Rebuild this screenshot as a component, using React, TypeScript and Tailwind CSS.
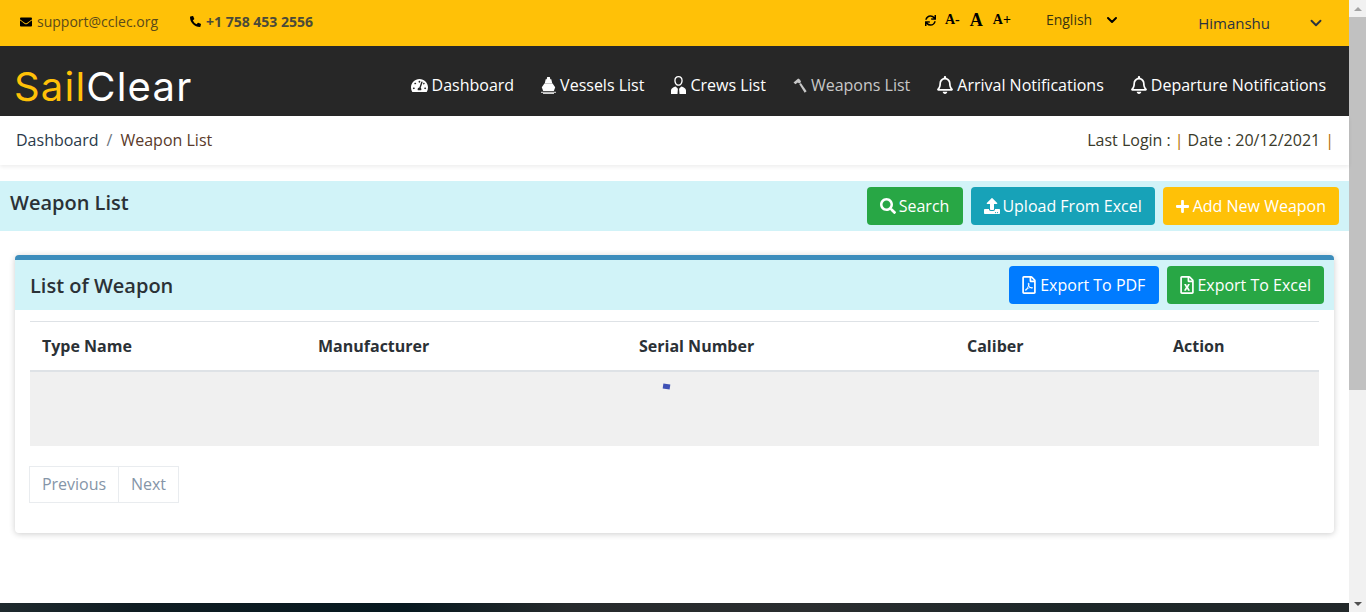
import React from 'react';
import {
  FaEnvelope,
  FaPhoneAlt,
  FaSync,
  FaTachometerAlt,
  FaRegBell,
  FaSearch,
  FaUpload,
  FaPlus,
  FaRegFilePdf,
  FaRegFileExcel,
} from 'react-icons/fa';
import { LuChevronDown } from 'react-icons/lu';

const ShipIcon = () => (
  <svg width="15" height="17" viewBox="0 0 15 17" fill="currentColor">
    <path d="M6.200 0h2.600l.5 2.200h1l1 4.300H3.700l1-4.300h1z" />
    <path d="M3.400 6.500h8.200l2.600 3.700-1.400 3.800H2.200L.8 10.200z" />
    <path d="M0 14.800h15v.9H0z" />
    <path d="M2 16.200h11v.8H2z" />
  </svg>
);

const CrewIcon = () => (
  <svg width="15" height="18" viewBox="0 0 15 18" fill="currentColor">
    <path
      fillRule="evenodd"
      d="M7.500 0c2.700 0 4.200 1.800 4.200 4.400 0 2.800-1.700 5.400-4.200 5.400S3.300 7.200 3.300 4.400C3.300 1.800 4.800 0 7.500 0zm0 1.200C5.700 1.200 4.600 2.600 4.600 4.400c0 2.100 1.300 4.200 2.900 4.200s2.900-2.100 2.900-4.200c0-1.800-1.100-3.200-2.900-3.200z"
    />
    <path d="M4.700 10.400l2.200 2.400-.4 5.200H0v-3.600c0-2.100 2.400-3.300 4.700-4zM10.300 10.400L8.100 12.800l.4 5.200H15v-3.600c0-2.100-2.400-3.300-4.700-4z" />
  </svg>
);

const HammerIcon = () => (
  <svg width="14" height="15" viewBox="0 0 14 15" fill="currentColor">
    <path d="M0.500 4.600L5.200.600l1.900 1.100 1 2.200-1.800 1.500-1.500-1-2.400 1.800z" />
    <path d="M6.300 6.300l1.600-1.300 5.700 8.200-1.900 1.500z" />
  </svg>
);

const NAV = [
  { label: 'Dashboard', icon: <FaTachometerAlt className="text-[17px]" />, cls: 'text-white' },
  { label: 'Vessels List', icon: <ShipIcon />, cls: 'text-white' },
  { label: 'Crews List', icon: <CrewIcon />, cls: 'text-white' },
  { label: 'Weapons List', icon: <HammerIcon />, cls: 'text-[#c8c8c8]' },
  { label: 'Arrival Notifications', icon: <FaRegBell className="h-[18px] w-[16px]" />, cls: 'text-white' },
  { label: 'Departure Notifications', icon: <FaRegBell className="h-[18px] w-[16px]" />, cls: 'text-white' },
];

const App: React.FC = () => {
  return (
    <div className="flex h-[612px] w-[1366px] overflow-hidden bg-white font-['Open_Sans',sans-serif] text-[#212529]">
      <div className="flex w-[1349px] flex-col">
        {/* top strip */}
        <div className="flex h-[46px] shrink-0 bg-[#ffc107]">
          <div className="flex items-center pb-[3px] pl-[20px] text-[14px]">
            <FaEnvelope className="mr-[5px] text-[12px] text-black" />
            <span className="text-[#5a4a1a]">support@cclec.org</span>
            <FaPhoneAlt className="ml-[32px] mr-[5px] text-[11px] text-black" />
            <span className="font-bold text-[#4a4a3a]">+1 758 453 2556</span>
          </div>
          <div className="ml-auto flex items-start">
            <div className="flex items-center pt-[11px] font-['Liberation_Serif',serif] font-bold text-black">
              <FaSync className="mr-[9px] text-[11px]" />
              <span className="mr-[10px] text-[14px] leading-[14px]">A-</span>
              <span className="mr-[10px] text-[18px] leading-[18px]">A</span>
              <span className="text-[14px] leading-[14px]">A+</span>
            </div>
            <div className="ml-[35px] flex items-center pt-[9px] text-[14px] text-[#3a3410]">
              English
              <LuChevronDown className="ml-[12px] text-[16px] text-black" strokeWidth={3} />
            </div>
            <div className="ml-[78px] mr-[24px] flex items-center pt-[12px] text-[15px] text-[#2b3340]">
              Himanshu
              <LuChevronDown className="ml-[37px] text-[18px]" strokeWidth={2.5} />
            </div>
          </div>
        </div>

        {/* main nav */}
        <div className="flex h-[70px] shrink-0 items-center bg-[#272727] pl-[14px] pr-[23px]">
          <div className="pt-[12px] font-['Inter',sans-serif] text-[40px] font-normal leading-none tracking-[1.2px]">
            <span className="text-[#ffc107]">Sail</span>
            <span className="text-white">Clear</span>
          </div>
          <div className="ml-auto flex items-center gap-[27px] pt-[8px]">
            {NAV.map((n) => (
              <div key={n.label} className={`flex items-center gap-[4px] text-[16px] font-medium ${n.cls}`}>
                {n.icon}
                <span>{n.label}</span>
              </div>
            ))}
          </div>
        </div>

        {/* breadcrumb */}
        <div className="relative flex h-[49px] shrink-0 items-center justify-between bg-white pb-[2px] pl-[16px] pr-[15px] text-[16px] shadow-[0_2px_4px_rgba(0,0,0,0.07)]">
          <div className="flex items-center text-[#2a3a4a]">
            <span>Dashboard</span>
            <span className="mx-[8px] text-[#6c757d]">/</span>
            <span className="text-[#5a3a2a]">Weapon List</span>
          </div>
          <div className="flex items-center text-[#3a3a2a]">
            <span>Last Login :</span>
            <span className="mx-[4px] text-[#b36b00]">|</span>
            <span>Date : 20/12/2021</span>
            <span className="ml-[5px] text-[#b36b00]">|</span>
          </div>
        </div>

        {/* title band */}
        <div className="mt-[16px] flex h-[50px] shrink-0 items-start justify-between bg-[#d1f3f8] pl-[10px] pr-[10px]">
          <h1 className="pt-[7px] text-[20px] font-semibold leading-[30px] text-[#2b3136]">Weapon List</h1>
          <div className="flex gap-[8px] pt-[6px]">
            <button className="flex h-[38px] items-center gap-[3px] rounded-[4px] bg-[#28a745] pl-[13px] pr-[14px] text-[16px] text-white">
              <FaSearch className="text-[16px]" /> Search
            </button>
            <button className="flex h-[38px] items-center gap-[2px] rounded-[4px] bg-[#17a2b8] px-[13px] text-[16px] text-white">
              <FaUpload className="text-[16px]" /> Upload From Excel
            </button>
            <button className="flex h-[38px] items-center gap-[4px] rounded-[4px] bg-[#ffc107] px-[13px] text-[16px] text-white">
              <FaPlus className="h-[15px] w-[13px]" /> Add New Weapon
            </button>
          </div>
        </div>

        {/* card */}
        <div className="ml-[15px] mt-[24px] h-[278px] w-[1319px] shrink-0 rounded-[4px] border-t-[5px] border-[#3c8dbc] bg-white shadow-[0_1px_6px_rgba(0,0,0,0.2)]">
          <div className="flex h-[50px] items-start justify-between bg-[#d1f3f8] pl-[15px] pr-[10px]">
            <h2 className="pt-[11px] text-[20px] font-semibold leading-[30px] text-[#2b3136]">List of Weapon</h2>
            <div className="flex gap-[8px] pt-[6px]">
              <button className="flex h-[38px] items-center gap-[4px] rounded-[4px] bg-[#007bff] pl-[13px] pr-[14px] text-[16px] text-white">
                <FaRegFilePdf className="h-[18px] w-[14px]" /> Export To PDF
              </button>
              <button className="flex h-[38px] items-center gap-[3px] rounded-[4px] bg-[#28a745] px-[13px] text-[16px] text-white">
                <FaRegFileExcel className="h-[18px] w-[14px]" /> Export To Excel
              </button>
            </div>
          </div>
          <div className="px-[15px] pt-[11px]">
            <div className="grid h-[51px] grid-cols-[276px_321px_328px_206px_1fr] items-center border-y border-b-2 border-t-[#dee2e6] border-b-[#dee2e6] pl-[12px] text-[16px] font-bold text-[#2b3136]">
              <div>Type Name</div>
              <div>Manufacturer</div>
              <div>Serial Number</div>
              <div>Caliber</div>
              <div>Action</div>
            </div>
            <div className="flex h-[74px] justify-center bg-[#f0f0f0] pr-[16px] pt-[12px]">
              <div className="h-[5px] w-[7px] rotate-[8deg] bg-[#3f51b5]" />
            </div>
            <div className="-ml-px mt-[20px] flex h-[37px] w-[150px] text-[16px] text-[#8595a8]">
              <div className="flex w-[90px] items-center justify-center border border-[#e9ecef] pb-[2px]">Previous</div>
              <div className="flex w-[60px] items-center justify-center border border-l-0 border-[#e9ecef] pb-[2px]">Next</div>
            </div>
          </div>
        </div>

        {/* footer peek */}
        <div className="mt-[70px] h-[9px] shrink-0 bg-[linear-gradient(90deg,#1f2a2e_0%,#0f1c22_10%,#06181f_30%,#262a2c_42%,#2a2d2f_60%,#1c2628_80%,#22282a_100%)]" />
      </div>

      {/* browser scrollbar */}
      <div className="flex w-[17px] shrink-0 flex-col items-center bg-[#f1f1f1]">
        <div className="flex h-[17px] items-center justify-center">
          <div className="h-0 w-0 border-x-[4px] border-b-[4px] border-x-transparent border-b-[#a3a3a3]" />
        </div>
        <div className="h-[373px] w-full bg-[#c1c1c1]" />
        <div className="mt-auto flex h-[17px] items-center justify-center">
          <div className="h-0 w-0 border-x-[4px] border-t-[4px] border-x-transparent border-t-[#505050]" />
        </div>
      </div>
    </div>
  );
};

export default App;
